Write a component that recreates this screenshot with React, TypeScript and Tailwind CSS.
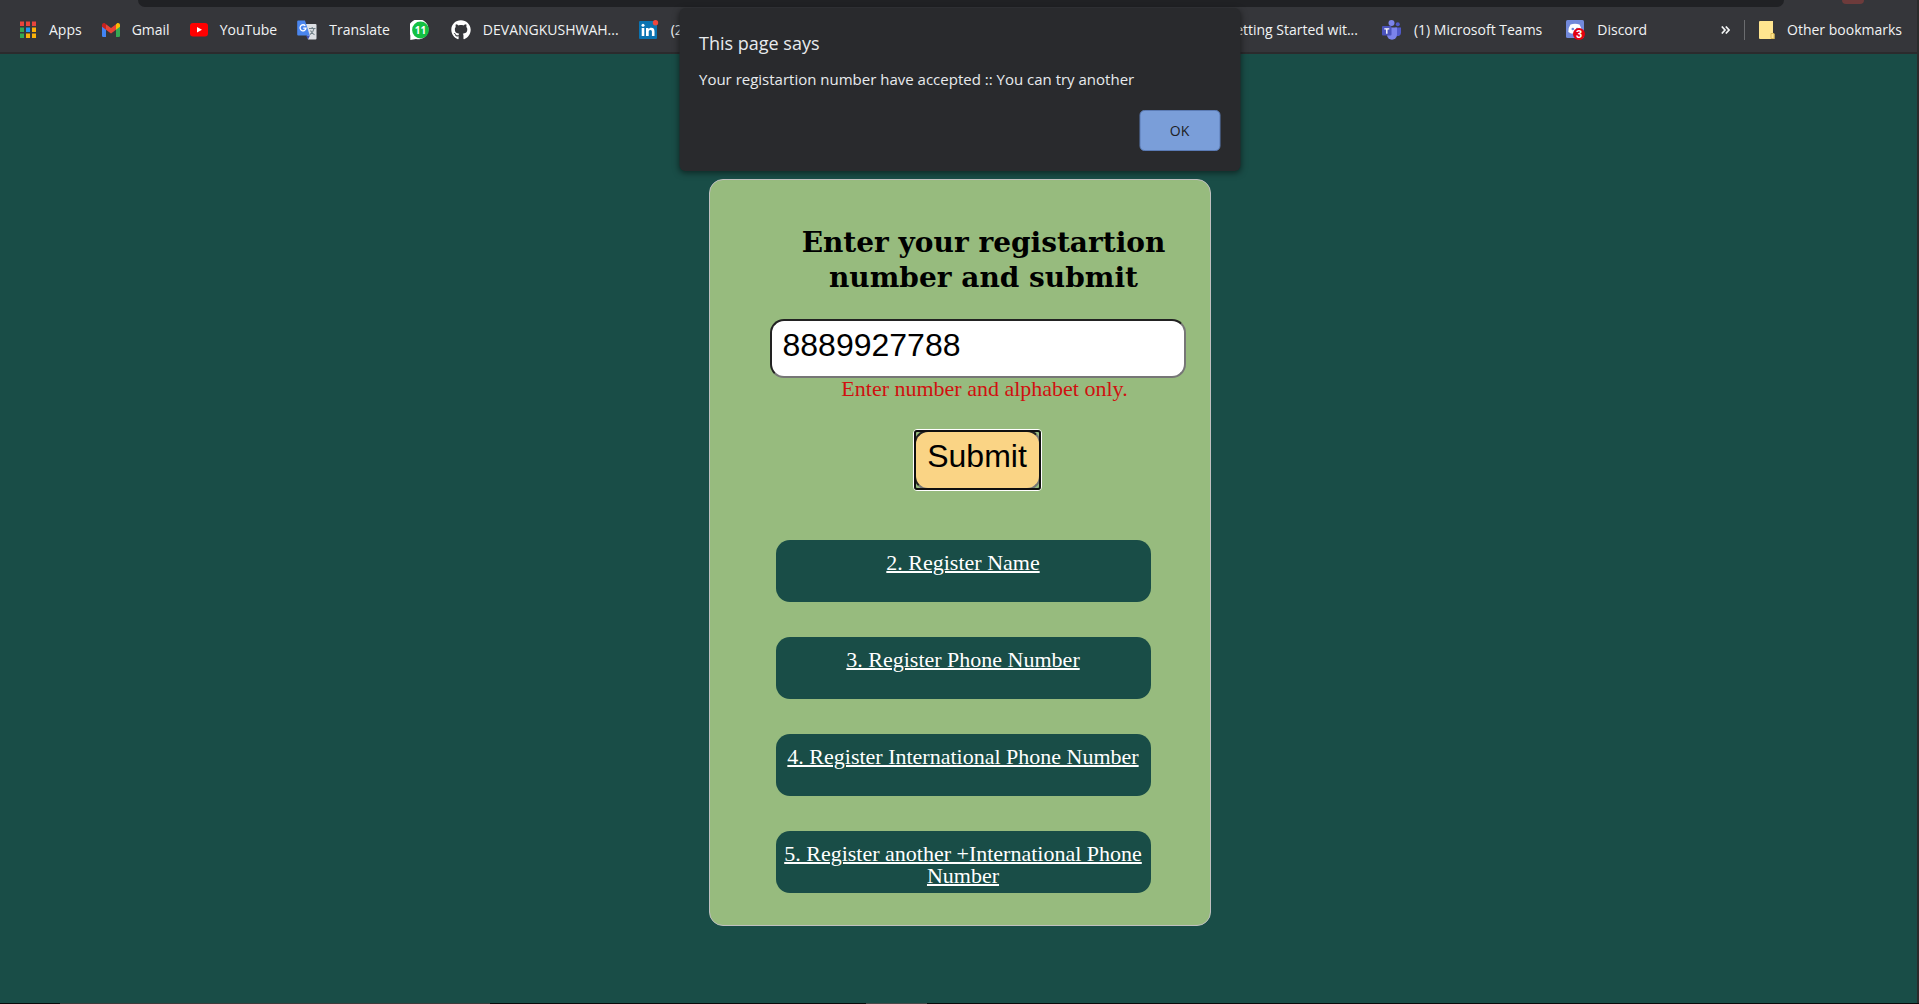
import React from "react";
import { FaGithub } from "react-icons/fa";

const ui = "font-['Segoe_UI','Open_Sans','Noto_Sans',sans-serif]";

function AppsIcon() {
  const colors = ["#e8453c", "#e8453c", "#e8453c", "#34a853", "#2196f3", "#fbb20a", "#34a853", "#fbb20a", "#fbb20a"];
  return (
    <svg width="17" height="18" viewBox="0 0 17 18" aria-hidden="true">
      {colors.map((c, i) => (
        <rect key={i} x={(i % 3) * 6} y={Math.floor(i / 3) * 6 + 0.5} width="4" height="4.5" fill={c} />
      ))}
    </svg>
  );
}

function GmailIcon() {
  return (
    <svg width="18" height="14" viewBox="0 0 18 14" aria-hidden="true">
      <path d="M0 2v10.800a1.200 1.200 0 0 0 1.200 1.200H4V5z" fill="#4285f4" />
      <path d="M18 2v10.800a1.200 1.200 0 0 1-1.200 1.200H14V5z" fill="#34a853" />
      <path d="M14 1.200V6.800L18 3.800V2c0-1.800-2-2.500-3.200-1.500z" fill="#fbbc04" />
      <path d="M4 6.800V1.200l5 3.800 5-3.800v5.600l-5 3.800z" fill="#ea4335" />
      <path d="M0 2v1.800l4 3V1.200L3.200.5C2-.5 0 .2 0 2z" fill="#c5221f" />
    </svg>
  );
}

function YouTubeIcon() {
  return (
    <svg width="18" height="14" viewBox="0 0 18 14" aria-hidden="true">
      <rect width="18" height="13.500" rx="3" fill="#f00" />
      <path d="M7 4l5 2.800L7 9.600z" fill="#fff" />
    </svg>
  );
}

function TranslateIcon() {
  return (
    <svg width="20" height="20" viewBox="0 0 20 20" aria-hidden="true">
      <path d="M8 4h10.500a1 1 0 0 1 1 1v13.500a1 1 0 0 1-1 1H11z" fill="#dcdfe3" />
      <path d="M9 15.500h4l-2 4z" fill="#3c51b5" />
      <path d="M12 8.500h6.500M15.200 7v1.500M17 8.500c-.5 3-2.500 5-4 6M13.500 10.500c1 2 2.500 3.500 4 4.300" stroke="#6f7f86" strokeWidth="1.100" fill="none" />
      <path d="M1.200.5H8l4.800 15H1.200a1 1 0 0 1-1-1v-13a1 1 0 0 1 1-1z" fill="#4a86ee" />
      <path d="M8.300 5.800A3 3 0 1 0 9 8.200H6.200" stroke="#fff" strokeWidth="1.300" fill="none" />
    </svg>
  );
}

function WhatsAppIcon() {
  return (
    <svg width="21" height="20" viewBox="0 0 21 20" aria-hidden="true">
      <path d="M.3 20V15A10 10 0 1 1 6 18.900z" fill="#fff" />
      <circle cx="10.500" cy="10" r="8.400" fill="#14c143" />
      <text x="10.500" y="13.800" textAnchor="middle" fontSize="10" fontWeight="700" fontFamily="Open Sans" fill="#fff">11</text>
    </svg>
  );
}

function LinkedInIcon() {
  return (
    <svg width="20" height="20" viewBox="0 0 20 20" aria-hidden="true">
      <rect y="1" width="18" height="18" rx="1" fill="#0a73b1" />
      <circle cx="4" cy="5.200" r="1.500" fill="#fff" />
      <path d="M2.700 8h2.600v8H2.700zM7 8h2.500v1.200C10 8.300 11 7.700 12.200 7.700c2.600 0 3.300 1.600 3.300 4V16h-2.600v-3.900c0-1.100-.2-2.100-1.500-2.100s-1.700.9-1.700 2.100V16H7z" fill="#fff" />
      <circle cx="16.500" cy="2.800" r="2.700" fill="#f0473c" />
    </svg>
  );
}

function TeamsIcon() {
  return (
    <svg width="20" height="20" viewBox="0 0 20 20" aria-hidden="true">
      <circle cx="9.500" cy="3" r="3" fill="#7b83eb" />
      <circle cx="15.800" cy="4.300" r="2" fill="#5059c9" />
      <path d="M13 7.500h6v5.300a3.200 3.200 0 0 1-5 2.700z" fill="#5059c9" />
      <path d="M5 7.500h10v7.300a5 5 0 0 1-10 0z" fill="#7b83eb" />
      <rect y="6" width="9.500" height="9.500" rx="1" fill="#4b53bc" />
      <path d="M2.300 8.200h5v1.300H5.500v4.300H4.100V9.500H2.300z" fill="#fff" />
    </svg>
  );
}

function DiscordIcon() {
  return (
    <svg width="19" height="20" viewBox="0 0 19 20" aria-hidden="true">
      <rect width="18" height="18" rx="1.500" fill="#7289da" />
      <path d="M4.500 4.500Q9 3 13.500 4.500 16 8 15.500 12L13 13.500H5L2.300 12Q2 8 4.500 4.500z" fill="#fff" />
      <circle cx="6.800" cy="9" r="1.300" fill="#7289da" />
      <circle cx="11.200" cy="9" r="1.300" fill="#7289da" />
      <circle cx="13" cy="14" r="6" fill="#e3000f" />
      <text x="13" y="18" textAnchor="middle" fontSize="11" fontWeight="700" fontFamily="Liberation Sans" fill="#fff">3</text>
    </svg>
  );
}

function FolderIcon() {
  return (
    <svg width="16" height="18" viewBox="0 0 16 18" aria-hidden="true">
      <path d="M1 0h13v12l1.500 1v5H1a1 1 0 0 1-1-1V1a1 1 0 0 1 1-1z" fill="#ffe58f" />
      <path d="M12 12.500h3v5h-3z" fill="#ffe58f" stroke="#d9b44a" strokeWidth=".8" />
    </svg>
  );
}

function Bookmark({ icon, label }: { icon?: React.ReactNode; label?: string }) {
  return (
    <a href="#" className="flex shrink-0 items-center gap-3 whitespace-nowrap">
      {icon}
      {label && <span>{label}</span>}
    </a>
  );
}

function BookmarksBar() {
  return (
    <header className={`h-[54px] border-b-2 border-[#2b2b2d] bg-[#35363a] text-[14px] leading-5 text-[#f1f3f4] ${ui}`}>
      <div className="flex h-[7px] items-start">
        <div className="ml-[138px] mr-[58px] h-[7px] flex-1 rounded-b-[14px] bg-[#202124]" />
        <div className="mr-[55px] h-1 w-[22px] rounded-b-full bg-[#6d3b3b]" />
      </div>
      <nav className="flex h-[45px] items-center justify-between pl-5 pr-[17px]">
        <div className="flex items-center gap-5">
          <Bookmark icon={<AppsIcon />} label="Apps" />
          <Bookmark icon={<GmailIcon />} label="Gmail" />
          <Bookmark icon={<YouTubeIcon />} label="YouTube" />
          <Bookmark icon={<TranslateIcon />} label="Translate" />
          <Bookmark icon={<WhatsAppIcon />} />
          <Bookmark icon={<FaGithub className="size-5 text-white" />} label="DEVANGKUSHWAH..." />
          <Bookmark icon={<LinkedInIcon />} label="(2" />
        </div>
        <div className="flex items-center">
          <div className="mr-[74px] flex items-center gap-6">
            <Bookmark label="Getting Started wit..." />
            <Bookmark icon={<TeamsIcon />} label="(1) Microsoft Teams" />
            <Bookmark icon={<DiscordIcon />} label="Discord" />
          </div>
          <button aria-label="More bookmarks" className="mr-[14px]">
            <svg width="9" height="8" viewBox="0 0 9 8" fill="none" stroke="#f1f3f4" strokeWidth="1.700" aria-hidden="true">
              <path d="M.8.500L4 4 .8 7.500M4.800.500L8 4 4.800 7.500" />
            </svg>
          </button>
          <div className="mr-[14px] h-5 w-px bg-[#6b6c6f]" />
          <Bookmark icon={<FolderIcon />} label="Other bookmarks" />
        </div>
      </nav>
    </header>
  );
}

function AlertDialog() {
  return (
    <div
      role="alertdialog"
      aria-labelledby="alert-title"
      aria-describedby="alert-text"
      className={`absolute left-1/2 top-2 flex w-[561px] -translate-x-1/2 flex-col rounded-md bg-[#292a2d] px-5 pb-5 pt-[21px] text-[#e8eaed] shadow-[0_2px_6px_rgba(0,0,0,0.5)] ${ui}`}
    >
      <h1 id="alert-title" className="text-[18px] leading-7">This page says</h1>
      <p id="alert-text" className="mt-2.5 text-[15px] leading-6">
        Your registartion number have accepted :: You can try another
      </p>
      <button className="mt-[19px] h-[41px] w-[81px] self-end rounded-[5px] border border-[#5b7bb5] bg-[#7a9ed9] text-[14px] text-[#202124]">
        OK
      </button>
    </div>
  );
}

const links = [
  "2. Register Name",
  "3. Register Phone Number",
  "4. Register International Phone Number",
  "5. Register another +International Phone Number",
];

export default function App() {
  return (
    <div className="relative min-h-screen bg-[#194d47]">
      <BookmarksBar />
      <main className="mx-auto mt-[125px] w-[502px] rounded-[14px] border border-[#c0c0c0] bg-[#97bb7e] pb-8 pt-[45px] text-center font-['Liberation_Serif',serif]">
        <form onSubmit={(e) => e.preventDefault()}>
          <h2 className="ml-[48px] font-['DejaVu_Serif',serif] text-[28px] font-bold leading-[35px] text-black">
            Enter your registartion
            <br />
            number and submit
          </h2>
          <input
            aria-label="Registration number"
            defaultValue="8889927788"
            className="ml-[60px] mt-6 block h-[59px] w-[416px] rounded-[14px] border-2 border-b-[#767676] border-l-[#222] border-r-[#767676] border-t-[#222] bg-white pb-1.5 pl-[11px] font-['Liberation_Sans',Arial,sans-serif] text-[32px] text-black"
          />
          <p className="ml-[50px] text-[22px] leading-[22px] text-[#d01010]">Enter number and alphabet only.</p>
          <div className="ml-[35px] mt-[29px]">
            <div className="relative mx-auto w-[129px] rounded-[4px] border border-white after:pointer-events-none after:absolute after:inset-0 after:rounded-[3px] after:border-2 after:border-[#101010]">
              <button className="block h-[60px] w-full rounded-[14px] border-2 border-b-[#767676] border-l-[#222] border-r-[#767676] border-t-[#222] bg-[#fad485] pb-2 font-['Liberation_Sans',Arial,sans-serif] text-[32px] leading-10 text-black">
                Submit
              </button>
            </div>
          </div>
        </form>
        <nav className="ml-[66px] mt-[49px] flex w-[375px] flex-col gap-[35px]">
          {links.map((label) => (
            <a
              key={label}
              href="#"
              className="block h-[62px] rounded-[14px] bg-[#194d47] pt-3 text-[22px] leading-[22px] text-white underline decoration-2"
            >
              {label}
            </a>
          ))}
        </nav>
      </main>
      <AlertDialog />
      <div className="absolute bottom-0 right-0 top-0 w-[2px] bg-[#2b2b2b]" />
      <div className="absolute bottom-0 left-0 right-0 flex h-px bg-[#0a0a0a]">
        <div className="ml-[60px] w-[430px] bg-[#3c3c3c]" />
        <div className="ml-[376px] w-[61px] bg-[#4a4a4a]" />
      </div>
    </div>
  );
}
